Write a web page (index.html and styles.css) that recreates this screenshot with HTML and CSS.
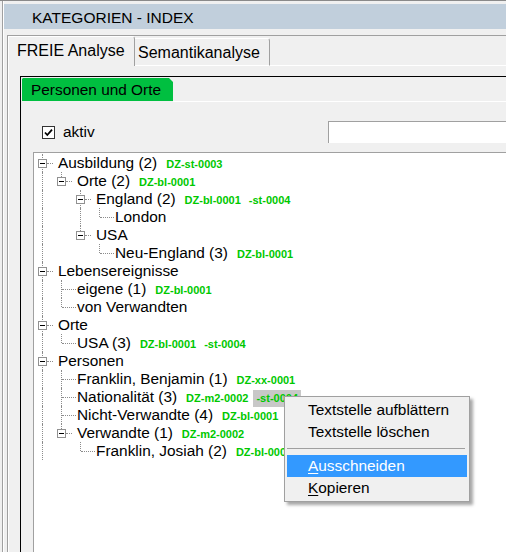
FILE: index.html
```html
<!DOCTYPE html>
<html>
<head>
<meta charset="utf-8">
<link rel="stylesheet" href="styles.css">
</head>
<body>
<div class="app">
  <div class="win">
    <div class="titlebar">KATEGORIEN - INDEX</div>
    <div class="group">
      <div class="tabstrip">
        <div class="tab active">FREIE Analyse</div>
        <div class="tab">Semantikanalyse</div>
        <div class="tabfill"></div>
      </div>
      <div class="panel">
        <div class="inner">
          <div class="subtabs">
            <div class="subtab">Personen und Orte</div>
            <div class="subfill"></div>
          </div>
          <div class="options">
            <div class="check">
              <svg class="cb" width="13" height="13" viewBox="0 0 13 13"><rect x="0.5" y="0.5" width="12" height="12" fill="#fff" stroke="#333"/><polyline points="3,6.5 5.3,9 10,3.6" fill="none" stroke="#000" stroke-width="1.8"/></svg>
              <span class="cblabel">aktiv</span>
            </div>
            <div class="search"></div>
          </div>
          <div class="tree">
            <div class="row"><span class="c b top cont"><i class="box"></i></span><span class="txt">Ausbildung (2)</span><span class="code">DZ-st-0003</span></div>
            <div class="row"><span class="c v"></span><span class="c b top"><i class="box"></i></span><span class="txt">Orte (2)</span><span class="code">DZ-bl-0001</span></div>
            <div class="row"><span class="c v"></span><span class="c"></span><span class="c b top cont"><i class="box"></i></span><span class="txt">England (2)</span><span class="code">DZ-bl-0001</span><span class="code2">-st-0004</span></div>
            <div class="row"><span class="c v"></span><span class="c"></span><span class="c v"></span><span class="c e"></span><span class="txt leaf">London</span></div>
            <div class="row"><span class="c v"></span><span class="c"></span><span class="c b top"><i class="box"></i></span><span class="txt">USA</span></div>
            <div class="row"><span class="c v"></span><span class="c"></span><span class="c"></span><span class="c e"></span><span class="txt leaf">Neu-England (3)</span><span class="code">DZ-bl-0001</span></div>
            <div class="row"><span class="c b top cont"><i class="box"></i></span><span class="txt">Lebensereignisse</span></div>
            <div class="row"><span class="c v"></span><span class="c t"></span><span class="txt leaf">eigene (1)</span><span class="code">DZ-bl-0001</span></div>
            <div class="row"><span class="c v"></span><span class="c e"></span><span class="txt leaf">von Verwandten</span></div>
            <div class="row"><span class="c b top cont"><i class="box"></i></span><span class="txt">Orte</span></div>
            <div class="row"><span class="c v"></span><span class="c e"></span><span class="txt leaf">USA (3)</span><span class="code">DZ-bl-0001</span><span class="code2">-st-0004</span></div>
            <div class="row"><span class="c b top cont"><i class="box"></i></span><span class="txt">Personen</span></div>
            <div class="row"><span class="c v"></span><span class="c t"></span><span class="txt leaf">Franklin, Benjamin (1)</span><span class="code">DZ-xx-0001</span></div>
            <div class="row"><span class="c v"></span><span class="c t"></span><span class="txt leaf">Nationalität (3)</span><span class="code">DZ-m2-0002</span><span class="code sel">-st-0004</span></div>
            <div class="row"><span class="c v"></span><span class="c t"></span><span class="txt leaf">Nicht-Verwandte (4)</span><span class="code">DZ-bl-0001</span></div>
            <div class="row"><span class="c v"></span><span class="c b top"><i class="box"></i></span><span class="txt">Verwandte (1)</span><span class="code">DZ-m2-0002</span></div>
            <div class="row"><span class="c v"></span><span class="c"></span><span class="c e"></span><span class="txt leaf">Franklin, Josiah (2)</span><span class="code">DZ-bl-0001</span></div>
          </div>
        </div>
      </div>
    </div>
  </div>
  <div class="menu">
    <div class="mi">Textstelle aufblättern</div>
    <div class="mi">Textstelle löschen</div>
    <div class="sep"></div>
    <div class="mi hl"><u>A</u>usschneiden</div>
    <div class="mi"><u>K</u>opieren</div>
  </div>
</div>
</body>
</html>
```
FILE: styles.css
```css
* { box-sizing: border-box; }
html, body { margin: 0; padding: 0; }
body {
  width: 506px;
  height: 552px;
  overflow: hidden;
  background: #f0f0f0;
  font-family: "Liberation Sans", Arial, sans-serif;
  color: #000;
}
.app {
  position: relative;
  height: 552px;
  border-top: 1px solid #8a8a8a;
  padding-left: 2px;
  background: #f0f0f0;
}
.win {
  height: 100%;
  border-left: 1px solid #a0a0a0;
  box-shadow: inset 1px 0 0 #fff;
  padding-top: 3px;
}
.titlebar {
  margin-left: 1px;
  height: 25px;
  line-height: 27px;
  background: #c1cfdc;
  padding-left: 28px;
  font-size: 15.5px;
}
.group {
  margin: 6px 0 0 4px;
  border-top: 1px solid #a0a0a0;
  border-left: 1px solid #a0a0a0;
  height: 520px;
}
.tabstrip {
  display: flex;
  align-items: flex-end;
  height: 30px;
}
.tab {
  flex: none;
  font-size: 16px;
}
.tab.active {
  width: 127px;
  height: 30px;
  border-left: 1px solid #fff;
  border-top: 1px solid #fff;
  border-right: 1px solid #a0a0a0;
  border-top-right-radius: 3px;
  padding-left: 8px;
  line-height: 28px;
}
.tab:not(.active) {
  width: 135px;
  height: 28px;
  border-top: 1px solid #fff;
  border-right: 1px solid #a0a0a0;
  border-bottom: 1px solid #fff;
  border-top-right-radius: 3px;
  padding-left: 3px;
  line-height: 28px;
}
.tabfill {
  flex: 1;
  height: 1px;
  background: #fff;
}
.panel {
  border-left: 1px solid #fff;
  height: 490px;
  padding: 10px 0 0 11px;
}
.inner {
  border-top: 1px solid #000;
  border-left: 1px solid #000;
  padding: 1px 0 0 1px;
  height: 480px;
}
.subtabs {
  display: flex;
  height: 24px;
}
.subtab {
  width: 151px;
  height: 23px;
  background: #00bf40;
  font-size: 15.4px;
  line-height: 23px;
  padding-left: 9px;
  clip-path: polygon(0 1px, 1px 0, calc(100% - 4px) 0, 100% 4px, 100% 100%, 0 100%);
}
.subfill {
  flex: 1;
  align-self: flex-end;
  height: 1px;
  background: #fff;
}
.options {
  display: flex;
  margin-top: 19px;
  height: 22px;
}
.check {
  width: 306px;
  flex: none;
  display: flex;
  align-items: center;
  padding-left: 20px;
}
.cb { display: block; flex: none; }
.cblabel {
  margin-left: 8px;
  font-size: 15.4px;
}
.search {
  flex: 1;
  background: #fff;
  border-top: 1px solid #a0a0a0;
  border-left: 1px solid #a0a0a0;
}
.tree {
  margin: 9px 0 0 11px;
  border-top: 1px solid #a0a0a0;
  border-left: 1px solid #a0a0a0;
  background: #fff;
  height: 420px;
  padding-top: 1px;
}
.row {
  display: flex;
  align-items: baseline;
  height: 18px;
  white-space: nowrap;
}
.c {
  position: relative;
  flex: none;
  width: 19px;
  height: 18px;
  align-self: flex-start;
}
.c.v::before,
.c.t::before,
.c.e::before,
.c.b::before {
  content: "";
  position: absolute;
  left: 8px;
  top: 0;
  height: 18px;
  border-left: 1px dotted #8c8c8c;
}
.c.e::before,
.c.b::before { height: 9px; }
.c.b.cont::before { height: 18px; }
.c.t::after,
.c.e::after {
  content: "";
  position: absolute;
  left: 9px;
  top: 9px;
  width: 14px;
  border-top: 1px dotted #8c8c8c;
}
.c.b::after {
  content: "";
  position: absolute;
  left: 13px;
  top: 9px;
  width: 6px;
  border-top: 1px dotted #8c8c8c;
}
.box {
  position: absolute;
  left: 4px;
  top: 5px;
  width: 9px;
  height: 9px;
  border: 1px solid #919191;
  background: #fff;
  z-index: 1;
}
.box::after {
  content: "";
  position: absolute;
  left: 1px;
  top: 3px;
  width: 5px;
  height: 1px;
  background: #000;
}
.txt {
  margin-left: 5px;
  font-size: 15.4px;
  line-height: 18px;
}
.code, .code2 {
  font-size: 11px;
  font-weight: bold;
  color: #00c800;
  margin-left: 9px;
}
.code2 { margin-left: 8px; }
.code.sel {
  margin-left: 5px;
  padding: 2px 3px 3px;
  background: #c8c8c8;
}
.menu {
  position: absolute;
  left: 284px;
  top: 395px;
  width: 186px;
  border: 1px solid #a0a0a0;
  background: #f0f0f0;
  padding: 2px;
  box-shadow: 3px 3px 3px rgba(0, 0, 0, 0.35);
  z-index: 5;
}
.mi {
  height: 22px;
  line-height: 22px;
  padding-left: 21px;
  font-size: 15.4px;
  white-space: nowrap;
}
.mi.hl {
  background: #3399ff;
  color: #fff;
}
.mi u { text-underline-offset: 2px; }
.sep {
  height: 1px;
  background: #a0a0a0;
  margin: 5px 2px 6px 0;
}
```
